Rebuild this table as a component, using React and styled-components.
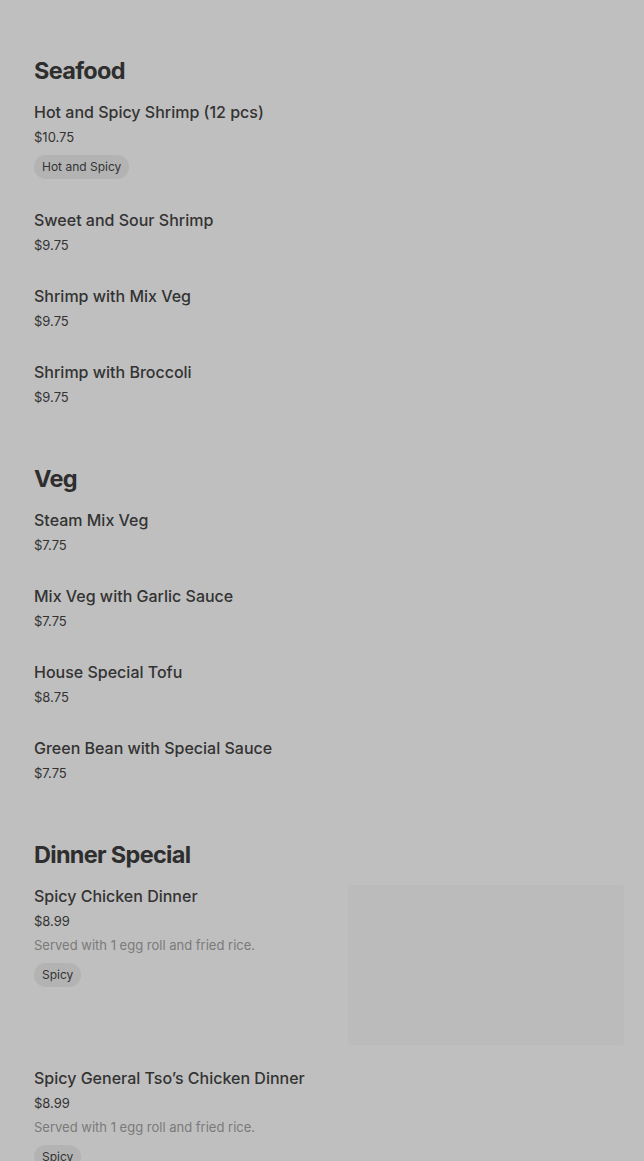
import React from "react";
import styled, { createGlobalStyle } from "styled-components";

const Global = createGlobalStyle`
  html, body { margin: 0; padding: 0; background: #bfbfbf; }
  body { font-family: Inter, "Noto Sans", sans-serif; color: #2f2f2f; }
`;

const Page = styled.div`
  padding: 55px 20px 0 34px;
  min-height: 1161px;
  box-sizing: border-box;
  background: #bfbfbf;
`;

const Section = styled.section`
  display: flex;
  flex-direction: column;
  & + & { margin-top: 27px; }
`;

const Heading = styled.h2`
  margin: 0 0 13px;
  font-size: 23.5px;
  line-height: 32px;
  font-weight: 700;
  letter-spacing: -0.7px;
  color: #2e2e2e;
`;

const Item = styled.div`
  display: flex;
  align-items: flex-start;
  gap: 18px;
  padding-bottom: ${(p) => (p.$img ? "21px" : "29px")};
`;

const Info = styled.div`
  flex: 1;
  display: flex;
  flex-direction: column;
  min-width: 0;
`;

const Name = styled.div`
  font-size: 16px;
  line-height: 24px;
  font-weight: 500;
  color: #333;
`;

const Price = styled.div`
  margin-top: 3px;
  font-size: 13px;
  line-height: 20px;
  color: #333;
`;

const Desc = styled.div`
  margin-top: 4px;
  font-size: 13px;
  line-height: 20px;
  color: #7a7a7a;
`;

const Tags = styled.div`
  display: flex;
  margin-top: 8px;
`;

const Tag = styled.span`
  display: inline-block;
  padding: 0 8px;
  height: 24px;
  line-height: 24px;
  border-radius: 12px;
  background: #b3b3b3;
  font-size: 12px;
  color: #333;
`;

const Thumb = styled.div`
  width: 276px;
  height: 160px;
  margin-top: 1px;
  flex: none;
  background: #bbbbbb;
  border-radius: 2px;
`;

const data = [
  {
    title: "Seafood",
    items: [
      { name: "Hot and Spicy Shrimp (12 pcs)", price: "$10.75", tag: "Hot and Spicy" },
      { name: "Sweet and Sour Shrimp", price: "$9.75" },
      { name: "Shrimp with Mix Veg", price: "$9.75" },
      { name: "Shrimp with Broccoli", price: "$9.75" },
    ],
  },
  {
    title: "Veg",
    items: [
      { name: "Steam Mix Veg", price: "$7.75" },
      { name: "Mix Veg with Garlic Sauce", price: "$7.75" },
      { name: "House Special Tofu", price: "$8.75" },
      { name: "Green Bean with Special Sauce", price: "$7.75" },
    ],
  },
  {
    title: "Dinner Special",
    items: [
      {
        name: "Spicy Chicken Dinner",
        price: "$8.99",
        desc: "Served with 1 egg roll and fried rice.",
        tag: "Spicy",
        img: true,
      },
      {
        name: "Spicy General Tso\u2019s Chicken Dinner",
        price: "$8.99",
        desc: "Served with 1 egg roll and fried rice.",
        tag: "Spicy",
      },
    ],
  },
];

export default function App() {
  return (
    <>
      <Global />
      <Page>
        {data.map((s) => (
          <Section key={s.title}>
            <Heading>{s.title}</Heading>
            {s.items.map((it) => (
              <Item key={it.name} $img={it.img}>
                <Info>
                  <Name>{it.name}</Name>
                  <Price>{it.price}</Price>
                  {it.desc && <Desc>{it.desc}</Desc>}
                  {it.tag && (
                    <Tags>
                      <Tag>{it.tag}</Tag>
                    </Tags>
                  )}
                </Info>
                {it.img && <Thumb />}
              </Item>
            ))}
          </Section>
        ))}
      </Page>
    </>
  );
}
